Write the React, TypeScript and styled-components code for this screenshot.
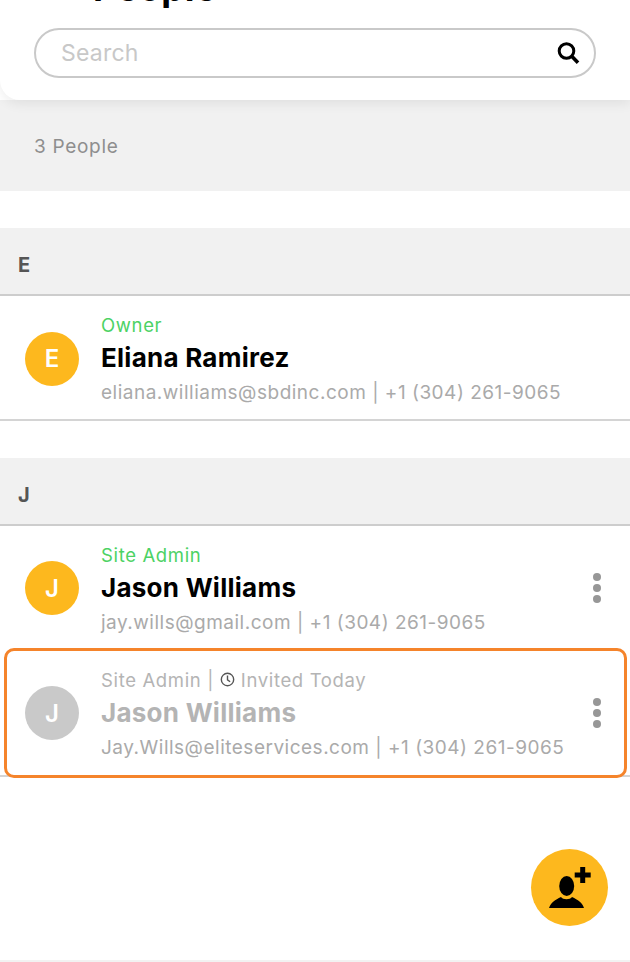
import { createGlobalStyle, styled } from "styled-components";

interface IPerson {
  initial: string;
  role: string;
  name: string;
  contact: string;
  invited?: boolean;
  menu?: boolean;
}

const sections: { letter: string; people: IPerson[] }[] = [
  {
    letter: "E",
    people: [
      {
        initial: "E",
        role: "Owner",
        name: "Eliana Ramirez",
        contact: "eliana.williams@sbdinc.com | +1 (304) 261-9065",
      },
    ],
  },
  {
    letter: "J",
    people: [
      {
        initial: "J",
        role: "Site Admin",
        name: "Jason Williams",
        contact: "jay.wills@gmail.com | +1 (304) 261-9065",
        menu: true,
      },
      {
        initial: "J",
        role: "Site Admin",
        name: "Jason Williams",
        contact: "Jay.Wills@eliteservices.com | +1 (304) 261-9065",
        invited: true,
        menu: true,
      },
    ],
  },
];

function PersonRow({ person, beforeInvited }: { person: IPerson; beforeInvited?: boolean }) {
  const { invited } = person;
  return (
    <Row $invited={invited} $beforeInvited={beforeInvited}>
      {invited && <Highlight />}
      <Avatar $invited={invited}>{person.initial}</Avatar>
      <Details>
        <Role $invited={invited}>
          {person.role}
          {invited && (
            <>
              {" | "}
              <svg width="15" height="15" viewBox="0 0 16 16" fill="none" stroke="#555" strokeWidth="1.5">
                <circle cx="8" cy="8" r="6.6" />
                <path d="M8 3.8V8.3L10.8 10.4" />
              </svg>
              {" Invited Today"}
            </>
          )}
        </Role>
        <Name $invited={invited}>{person.name}</Name>
        <Contact>{person.contact}</Contact>
      </Details>
      {person.menu && (
        <Menu>
          <Dot />
          <Dot />
          <Dot />
        </Menu>
      )}
    </Row>
  );
}

export default function App() {
  return (
    <>
      <GlobalStyle />
      <Page>
        <Header>
          <Title>People</Title>
          <SearchBox>
            <SearchText>Search</SearchText>
            <svg width="26" height="26" viewBox="0 0 26 26" fill="none" stroke="#000">
              <circle cx="11.5" cy="11" r="7.3" strokeWidth="3" />
              <path d="M17 16.5L23 22.8" strokeWidth="3.6" />
            </svg>
          </SearchBox>
        </Header>
        <CountBand>3 People</CountBand>
        {sections.map((section) => (
          <Section key={section.letter}>
            <SectionHeader>{section.letter}</SectionHeader>
            {section.people.map((person, i) => (
              <PersonRow
                key={person.contact}
                person={person}
                beforeInvited={section.people[i + 1]?.invited}
              />
            ))}
          </Section>
        ))}
        <Fab>
          <svg width="77" height="77" viewBox="0 0 77 77" fill="#000">
            <ellipse cx="35.7" cy="37" rx="7.5" ry="10" />
            <path d="M18 59C20 53 24 51 30 48C32 51 39 51 41 48C47 51 51 53 53 59Z" />
            <path d="M49.2 18H54.2V23.5H59.7V28.5H54.2V34H49.2V28.5H43.7V23.5H49.2Z" />
          </svg>
        </Fab>
      </Page>
    </>
  );
}

const GlobalStyle = createGlobalStyle`
  html, body {
    margin: 0;
    padding: 0;
    background: #fff;
  }
  * {
    box-sizing: border-box;
  }
`;

const Page = styled.div`
  position: relative;
  width: 630px;
  height: 962px;
  overflow: hidden;
  background: #fff;
  border-bottom: 2px solid #f2f2f2;
  font-family: Inter, Roboto, "Liberation Sans", sans-serif;
`;

const Header = styled.header`
  position: relative;
  z-index: 1;
  height: 100px;
  padding: 28px 34px 0;
  background: #fff;
  border-bottom-left-radius: 20px;
  box-shadow: 0 4px 12px rgba(0, 0, 0, 0.07);
`;

const Title = styled.h1`
  position: absolute;
  left: 93px;
  top: -33px;
  margin: 0;
  font-size: 36px;
  line-height: 42px;
  font-weight: 700;
  letter-spacing: 0.6px;
  color: #000;
`;

const SearchBox = styled.div`
  display: flex;
  align-items: center;
  justify-content: space-between;
  height: 50px;
  padding: 0 13px 0 25px;
  border: 2px solid #c9c9c9;
  border-radius: 25px;
`;

const SearchText = styled.span`
  font-size: 23px;
  letter-spacing: 0.2px;
  color: #c8c8c8;
`;

const CountBand = styled.div`
  height: 91px;
  padding: 34px 34px 0;
  background: #f1f1f1;
  font-size: 19px;
  line-height: 26px;
  letter-spacing: 0.7px;
  color: #8e8e8e;
`;

const Section = styled.section`
  margin-top: 37px;
`;

const SectionHeader = styled.div`
  height: 68px;
  padding: 23px 18px 0;
  background: #f1f1f1;
  border-bottom: 2px solid #cdcdcd;
  font-size: 20px;
  line-height: 28px;
  font-weight: 700;
  color: #555;
`;

const Row = styled.div<{ $invited?: boolean; $beforeInvited?: boolean }>`
  position: relative;
  display: flex;
  align-items: center;
  height: 125px;
  padding: 2px 29px 0 25px;
  border-bottom: 2px solid #d4d4d4;
  ${({ $beforeInvited }) =>
    $beforeInvited &&
    `
    height: 122px;
    border-bottom: none;
  `}
  ${({ $invited }) =>
    $invited &&
    `
    height: 129px;
    padding-top: 3px;
  `}
`;

const Highlight = styled.div`
  position: absolute;
  left: 4px;
  right: 3px;
  top: 0;
  bottom: -3px;
  border: 3px solid #f5842b;
  border-radius: 10px;
`;

const Avatar = styled.div<{ $invited?: boolean }>`
  display: flex;
  align-items: center;
  justify-content: center;
  flex: none;
  width: 54px;
  height: 54px;
  border-radius: 50%;
  background: ${({ $invited }) => ($invited ? "#c9c9c9" : "#fdb81e")};
  font-size: 24px;
  font-weight: 600;
  color: #fff;
`;

const Details = styled.div`
  flex: 1;
  margin-left: 22px;
  padding-top: 2px;
`;

const Role = styled.div<{ $invited?: boolean }>`
  display: flex;
  align-items: center;
  white-space: pre;
  font-size: 18.5px;
  line-height: 24px;
  letter-spacing: 0.65px;
  color: ${({ $invited }) => ($invited ? "#b4b4b4" : "#4cd264")};
`;

const Name = styled.div<{ $invited?: boolean }>`
  margin-top: 5px;
  font-size: 26px;
  line-height: 32px;
  font-weight: 700;
  letter-spacing: 0.25px;
  color: ${({ $invited }) => ($invited ? "#b4b4b4" : "#000")};
`;

const Contact = styled.div`
  margin-top: 6px;
  font-size: 19px;
  line-height: 26px;
  letter-spacing: 0.5px;
  color: #aaa;
`;

const Menu = styled.div`
  display: flex;
  flex-direction: column;
  gap: 3px;
  flex: none;
  margin-left: auto;
`;

const Dot = styled.span`
  width: 8px;
  height: 8px;
  border-radius: 50%;
  background: #979797;
`;

const Fab = styled.div`
  position: absolute;
  left: 531px;
  top: 849px;
  width: 77px;
  height: 77px;
  border-radius: 50%;
  background: #fdb81e;
`;
